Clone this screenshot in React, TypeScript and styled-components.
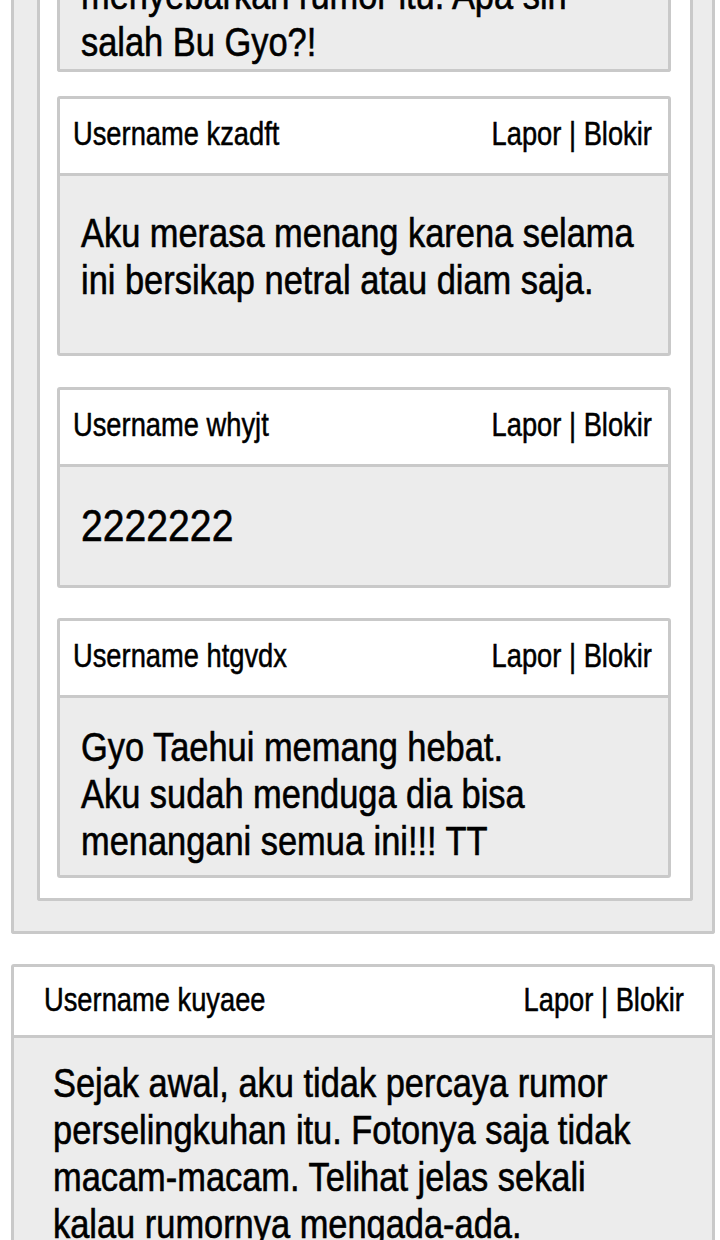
import React from "react";
import styled, { createGlobalStyle } from "styled-components";

const GlobalStyle = createGlobalStyle`
  html, body {
    margin: 0;
    padding: 0;
    background: #ffffff;
  }
  body {
    font-family: "Liberation Sans", Arial, Helvetica, sans-serif;
    color: #000000;
  }
  * { box-sizing: border-box; }
`;

const LINE = "#c9c9c9";
const GREY = "#ececec";

const Page = styled.div`
  width: 720px;
  height: 1240px;
  overflow: hidden;
  display: flex;
  flex-direction: column;
  background: #ffffff;
  & > * { flex-shrink: 0; }
`;

const OuterPanel = styled.section`
  margin-left: 11px;
  width: 704px;
  display: flex;
  flex-direction: column;
  background: ${GREY};
  border: 3px solid ${LINE};
  border-top: none;
  border-radius: 0 0 3px 3px;
  padding: 0 19px 30px 23px;
`;

const InnerPanel = styled.div`
  display: flex;
  flex-direction: column;
  background: #ffffff;
  border: 3px solid ${LINE};
  border-top: none;
  border-radius: 0 0 3px 3px;
  padding: 0 19px 20px 17px;
  & > * { flex-shrink: 0; }
`;

const Card = styled.article<{ $mt?: number; $cut?: boolean; $wide?: boolean }>`
  display: flex;
  flex-direction: column;
  flex-shrink: 0;
  margin-top: ${(p) => p.$mt ?? 0}px;
  ${(p) => (p.$wide ? "margin-left: 11px; width: 704px;" : "")}
  border: 3px solid ${LINE};
  ${(p) => (p.$cut ? "border-top: none;" : "")}
  border-radius: ${(p) => (p.$cut ? "0 0 3px 3px" : "3px")};
  overflow: hidden;
  background: ${GREY};
  & > * { flex-shrink: 0; }
`;

const Header = styled.header<{ $h: number; $pl: number; $pr: number; $pb?: number }>`
  height: ${(p) => p.$h}px;
  display: flex;
  align-items: center;
  justify-content: space-between;
  padding: 0 ${(p) => p.$pr}px ${(p) => p.$pb ?? 0}px ${(p) => p.$pl}px;
  background: #ffffff;
  border-bottom: 3px solid ${LINE};
  font-size: 32.5px;
  line-height: 1.15;
  white-space: nowrap;
  -webkit-text-stroke: 0.5px #000;
`;

const Username = styled.span`
  display: inline-block;
  transform: scaleX(0.84);
  transform-origin: left center;
`;

const Actions = styled.span`
  display: inline-block;
  transform: scaleX(0.84);
  transform-origin: right center;
`;

const Body = styled.div<{ $pt: number; $pb: number; $pl: number }>`
  padding: ${(p) => p.$pt}px 0 ${(p) => p.$pb}px ${(p) => p.$pl}px;
  display: flex;
  flex-direction: column;
`;

const Lines = styled.p<{ $size?: number; $lh?: number; $shift?: number }>`
  margin: ${(p) => p.$shift ?? 0}px 0 0 0;
  font-size: ${(p) => p.$size ?? 40}px;
  line-height: ${(p) => p.$lh ?? 47}px;
  -webkit-text-stroke: 0.6px #000;
`;

const Line = styled.span<{ $sx?: number }>`
  display: block;
  white-space: nowrap;
  transform: scaleX(${(p) => p.$sx ?? 0.86});
  transform-origin: left center;
`;

type Comment = {
  user: string;
  lines: string[];
  mt: number;
  pt: number;
  pb: number;
  size?: number;
  lh?: number;
  sx?: number;
};

const comments: Comment[] = [
  {
    user: "Username kzadft",
    lines: ["Aku merasa menang karena selama", "ini bersikap netral atau diam saja."],
    mt: 24,
    pt: 34,
    pb: 49,
  },
  {
    user: "Username whyjt",
    lines: ["2222222"],
    mt: 31,
    pt: 31,
    pb: 31,
    size: 45,
    lh: 56,
    sx: 0.87,
  },
  {
    user: "Username htgvdx",
    lines: [
      "Gyo Taehui memang hebat.",
      "Aku sudah menduga dia bisa",
      "menangani semua ini!!! TT",
    ],
    mt: 30,
    pt: 26,
    pb: 10,
  },
];

export default function App() {
  return (
    <>
      <GlobalStyle />
      <Page>
        <OuterPanel>
          <InnerPanel>
            <Card $cut>
              <Body $pt={0} $pb={3} $pl={21}>
                <Lines $shift={-28}>
                  <Line>menyebarkan rumor itu. Apa sih</Line>
                  <Line>salah Bu Gyo?!</Line>
                </Lines>
              </Body>
            </Card>
            {comments.map((c) => (
              <Card key={c.user} $mt={c.mt}>
                <Header $h={77} $pl={13} $pr={16} $pb={3}>
                  <Username>{c.user}</Username>
                  <Actions>Lapor | Blokir</Actions>
                </Header>
                <Body $pt={c.pt} $pb={c.pb} $pl={21}>
                  <Lines $size={c.size} $lh={c.lh}>
                    {c.lines.map((l) => (
                      <Line key={l} $sx={c.sx}>
                        {l}
                      </Line>
                    ))}
                  </Lines>
                </Body>
              </Card>
            ))}
          </InnerPanel>
        </OuterPanel>
        <Card $wide $mt={30}>
          <Header $h={71} $pl={30} $pr={28}>
            <Username>Username kuyaee</Username>
            <Actions>Lapor | Blokir</Actions>
          </Header>
          <Body $pt={22} $pb={0} $pl={39}>
            <Lines>
              <Line>Sejak awal, aku tidak percaya rumor</Line>
              <Line>perselingkuhan itu. Fotonya saja tidak</Line>
              <Line>macam-macam. Telihat jelas sekali</Line>
              <Line>kalau rumornya mengada-ada.</Line>
            </Lines>
          </Body>
        </Card>
      </Page>
    </>
  );
}
